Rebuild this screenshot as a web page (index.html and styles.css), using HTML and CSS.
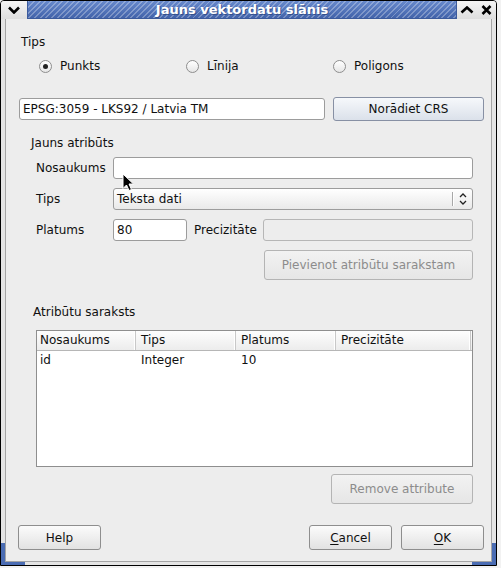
FILE: index.html
```html
<!DOCTYPE html>
<html>

<head>
  <meta charset="utf-8" />
  <title>Jauns vektordatu slānis</title>
  <link rel="stylesheet" href="styles.css">
</head>

<body>
  <div class="window">
    <div class="titlebar">
      <div class="tb-btn tb-menu">
        <svg width="12" height="8" viewBox="0 0 12 8"><path d="M1 1.5 L6 6.5 L11 1.5" fill="none" stroke="#000" stroke-width="2.6" /></svg>
      </div>
      <div class="tb-title">Jauns vektordatu slānis</div>
      <div class="tb-btn tb-max">
        <svg width="14" height="8" viewBox="0 0 14 8"><path d="M1.5 6.5 L7 1.5 L12.5 6.5" fill="none" stroke="#000" stroke-width="2.6" /></svg>
      </div>
      <div class="tb-btn tb-close">
        <svg width="11" height="10" viewBox="0 0 11 10"><path d="M1.5 1 L9.5 9 M9.5 1 L1.5 9" fill="none" stroke="#000" stroke-width="2.6" /></svg>
      </div>
    </div>

    <div class="frame">
      <div class="client">
        <div class="heading tips-head">Tips</div>
        <div class="radios">
          <label class="radio"><span class="dot checked"></span>Punkts</label>
          <label class="radio"><span class="dot"></span>Līnija</label>
          <label class="radio"><span class="dot"></span>Poligons</label>
        </div>

        <div class="crs-row">
          <div class="input crs">EPSG:3059 - LKS92 / Latvia TM</div>
          <button class="btn btn-crs">Norādiet CRS</button>
        </div>

        <div class="heading group-head">Jauns atribūts</div>
        <div class="field-row">
          <span class="field-label">Nosaukums</span>
          <div class="input wide"></div>
        </div>
        <div class="field-row">
          <span class="field-label">Tips</span>
          <div class="combo">
            <span class="combo-text">Teksta dati</span>
            <span class="combo-sep"></span>
            <svg class="combo-arrows" width="8" height="12" viewBox="0 0 8 12"><path d="M1 4 L4 1 L7 4 M1 8 L4 11 L7 8" fill="none" stroke="#222" stroke-width="1.3" /></svg>
          </div>
        </div>
        <div class="field-row">
          <span class="field-label">Platums</span>
          <div class="input short">80</div>
          <span class="prec-label">Precizitāte</span>
          <div class="input disabled prec"></div>
        </div>
        <div class="add-row">
          <button class="btn disabled btn-add">Pievienot atribūtu sarakstam</button>
        </div>

        <div class="heading list-head">Atribūtu saraksts</div>
        <div class="table">
          <div class="thead">
            <span class="th">Nosaukums</span>
            <span class="th">Tips</span>
            <span class="th">Platums</span>
            <span class="th last">Precizitāte</span>
          </div>
          <div class="tr">
            <span class="td">id</span>
            <span class="td">Integer</span>
            <span class="td">10</span>
            <span class="td"></span>
          </div>
        </div>
        <div class="remove-row">
          <button class="btn disabled btn-remove">Remove attribute</button>
        </div>

        <div class="buttons">
          <button class="btn btn-dlg">Help</button>
          <span class="spacer"></span>
          <button class="btn btn-dlg"><u>C</u>ancel</button>
          <button class="btn btn-dlg btn-ok"><u>O</u>K</button>
        </div>
      </div>
    </div>
  </div>

  <svg class="cursor" width="13" height="19" viewBox="0 0 13 19">
    <path d="M1 1 L1 15.5 L4.5 12 L7 17.5 L9.5 16.5 L7 11 L11.5 11 Z" fill="#000" stroke="#fff" stroke-width="1" stroke-linejoin="round" />
  </svg>
</body>

</html>
```

FILE: styles.css
```css
body {
  font-family: "DejaVu Sans", sans-serif;
  font-size: 12px;
  color: #101010;
  background-color: #f2f2f2;
  padding: 0;
  margin: 0;
  overflow: hidden;
}

.window {
  width: 497px;
  height: 566px;
  box-sizing: border-box;
  border: 1px solid #000;
  border-radius: 4px 4px 0 0;
  background: #e4e4e4;
  display: flex;
  flex-direction: column;
}

/* title bar */

.titlebar {
  height: 18px;
  display: flex;
  flex: none;
}

.tb-btn {
  display: flex;
  align-items: center;
  justify-content: center;
  background: linear-gradient(#f4f4f4, #dedede);
}

.tb-menu {
  width: 26px;
  border-radius: 3px 0 0 0;
}

.tb-max {
  width: 20px;
}

.tb-close {
  width: 19px;
  border-radius: 0 3px 0 0;
}

.tb-title {
  flex: 1;
  border: 1px solid #3b5a9c;
  border-top: none;
  background:
    repeating-linear-gradient(135deg, rgba(255, 255, 255, 0.28) 0 1.4px, transparent 1.4px 4px),
    linear-gradient(#6789cc, #4263aa);
  color: #fff;
  font-weight: bold;
  font-size: 13px;
  line-height: 17px;
  text-align: center;
  text-shadow: 1px 1px 0 #34508c;
}

/* frame around the dialog body */

.frame {
  flex: 1;
  position: relative;
  padding: 0 4px 3px 4px;
  display: flex;
}

.frame::before,
.frame::after {
  content: "";
  position: absolute;
  bottom: 0;
  width: 20px;
  height: 19px;
  border-bottom: 3px solid #4a6cb3;
}

.frame::before {
  left: 0;
  border-left: 4px solid #4a6cb3;
}

.frame::after {
  right: 0;
  border-right: 4px solid #4a6cb3;
}

.client {
  flex: 1;
  position: relative;
  z-index: 1;
  background: #ededed;
  border: 1px solid #a4a4a4;
  border-top: none;
  padding: 16px 7px 0 12px;
  display: flex;
  flex-direction: column;
}

.heading {
  height: 14px;
  line-height: 14px;
}

.tips-head {
  margin-left: 3px;
}

/* radio buttons */

.radios {
  margin: 10px 0 0 21px;
  height: 14px;
  display: grid;
  grid-template-columns: repeat(3, 147px);
}

.radio {
  display: flex;
  align-items: center;
  gap: 8px;
  line-height: 14px;
}

.dot {
  width: 11px;
  height: 11px;
  border: 1px solid #8e8e8e;
  border-radius: 50%;
  background: linear-gradient(#ffffff, #e6e6e6);
  display: flex;
  align-items: center;
  justify-content: center;
}

.dot.checked::after {
  content: "";
  width: 5px;
  height: 5px;
  border-radius: 50%;
  background: #222;
}

/* text inputs and buttons */

.input {
  box-sizing: border-box;
  height: 22px;
  border: 1px solid #9c9c9c;
  border-radius: 3px;
  background: #fff;
  padding: 0 3px;
  line-height: 20px;
  white-space: nowrap;
}

.input.disabled {
  background: #ededed;
  border-color: #b6b6b6;
}

.btn {
  font-family: inherit;
  font-size: 12px;
  color: #101010;
  box-sizing: border-box;
  border: 1px solid #8e8e8e;
  border-radius: 3px;
  background: linear-gradient(#fbfbfb, #e2e2e2);
  padding: 0;
  margin: 0;
}

.btn.disabled {
  color: #8c8c8c;
  border-color: #b4b4b4;
  background: linear-gradient(#f2f2f2, #e6e6e6);
}

.btn u {
  text-decoration-thickness: 1px;
  text-underline-offset: 2px;
}

.crs-row {
  margin-top: 24px;
  height: 24px;
  display: flex;
  align-items: center;
}

.crs {
  margin-left: 1px;
  width: 306px;
}

.btn-crs {
  margin-left: auto;
  width: 151px;
  height: 24px;
  border-color: #8790a4;
  background: linear-gradient(#f6f8fb, #dbe1ea);
}

/* new attribute group */

.group-head {
  margin: 15px 0 0 13px;
}

.field-row {
  margin: 9px 11px 0 18px;
  height: 22px;
  display: flex;
  align-items: center;
}

.group-head + .field-row {
  margin-top: 7px;
}

.field-label {
  width: 77px;
  flex: none;
}

.wide {
  flex: 1;
}

.combo {
  flex: 1;
  box-sizing: border-box;
  height: 22px;
  border: 1px solid #9c9c9c;
  border-radius: 3px;
  background: linear-gradient(#ffffff, #e9e9e9);
  display: flex;
  align-items: center;
  padding-left: 3px;
}

.combo-text {
  flex: 1;
}

.combo-sep {
  width: 1px;
  height: 14px;
  background: #a8a8a8;
  box-shadow: 1px 0 0 #fff;
  margin-right: 6px;
}

.combo-arrows {
  margin-right: 5px;
}

.short {
  width: 74px;
}

.prec-label {
  margin-left: 7px;
  width: 69px;
  flex: none;
}

.prec {
  flex: 1;
}

.add-row {
  margin: 9px 11px 0 0;
  display: flex;
  justify-content: flex-end;
}

.btn-add {
  width: 209px;
  height: 30px;
}

/* attribute list */

.list-head {
  margin: 25px 0 0 15px;
}

.table {
  margin: 11px 11px 0 18px;
  height: 137px;
  box-sizing: border-box;
  border: 1px solid #8e8e8e;
  background: #fff;
}

.thead,
.tr {
  display: grid;
  grid-template-columns: 99px 100px 100px 1fr;
}

.thead {
  height: 19px;
  background: linear-gradient(#fdfdfd, #ececec);
  border-bottom: 1px solid #b6b6b6;
}

.th {
  line-height: 19px;
  padding-left: 5px;
  border-right: 1px solid #c8c8c8;
  box-shadow: inset -1px 0 0 #fff;
}

.th:first-child,
.td:first-child {
  padding-left: 3px;
}

.th.last {
  margin-right: 1px;
}

.tr {
  height: 18px;
}

.td {
  line-height: 18px;
  padding-left: 5px;
}

.remove-row {
  margin: 7px 11px 0 0;
  display: flex;
  justify-content: flex-end;
}

.btn-remove {
  width: 142px;
  height: 30px;
}

/* dialog buttons */

.buttons {
  margin: 21px 0 0 0;
  display: flex;
  gap: 9px;
}

.spacer {
  flex: 1;
}

.btn-dlg {
  width: 83px;
  height: 25px;
}

.cursor {
  position: absolute;
  left: 122px;
  top: 173px;
  z-index: 5;
}
```
